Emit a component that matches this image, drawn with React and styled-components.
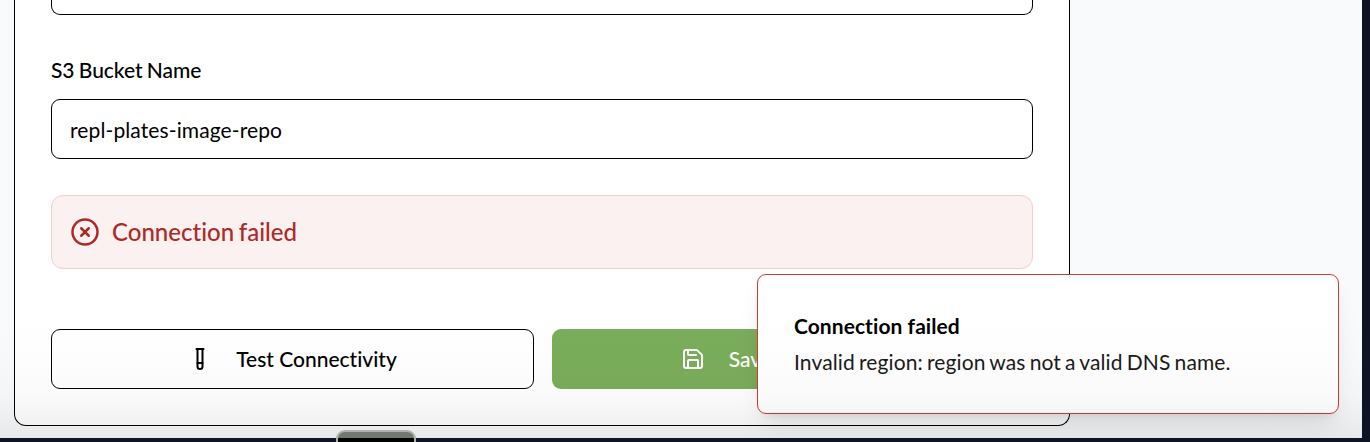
import React from "react";
import styled, { createGlobalStyle } from "styled-components";
import { CircleX, Save, TestTube } from "lucide-react";

const GlobalStyle = createGlobalStyle`
  *, *::before, *::after { box-sizing: border-box; }
  body { margin: 0; background: #0d1424; overflow: hidden; }
`;

const Desktop = styled.div`
  position: relative;
  width: 1370px;
  height: 442px;
  padding: 0 8px 4px 0;
  overflow: hidden;
  background: #0d1424;
  color: #000;
  font-family: Lato, "Liberation Sans", sans-serif;
  font-size: 21px;
  font-variant-ligatures: none;
  line-height: 30px;
`;

const Page = styled.main`
  position: relative;
  height: 438px;
  padding-left: 14px;
  overflow: hidden;
  background: #f8fafc;
`;

const Card = styled.section`
  display: flex;
  flex-direction: column;
  width: 1056px;
  height: 426px;
  padding: 0 36px 36px;
  border: 1px solid #000;
  border-top: 0;
  border-radius: 0 0 12px 12px;
  background: #fff;
`;

const Field = styled.div`
  height: ${(p) => p.$height || 60}px;
  flex: none;
  display: flex;
  align-items: center;
  padding: 2px 18px 0;
  border: 1px solid #000;
  border-radius: 9px;
  letter-spacing: 0.11px;
  ${(p) => p.$cut && "border-top: 0; border-top-left-radius: 0; border-top-right-radius: 0;"}
`;

const Label = styled.label`
  margin: 40px 0 14px;
  font-weight: 500;
  letter-spacing: -0.05px;
  word-spacing: -1px;
`;

const Alert = styled.div`
  display: flex;
  align-items: center;
  gap: 12px;
  height: 74px;
  margin-top: 36px;
  padding: 0 18px;
  border: 1px solid #f6cccc;
  border-radius: 12px;
  background: #fcf1f1;
  color: #ab2b26;
  font-size: 24px;
  font-weight: 500;
  word-spacing: -1.3px;
`;

const Actions = styled.div`
  display: grid;
  grid-template-columns: 483px 481px;
  gap: 18px;
  margin-top: 60px;
`;

const Button = styled.button`
  display: flex;
  align-items: center;
  justify-content: center;
  gap: 24px;
  height: 60px;
  padding: 0;
  border: ${(p) => (p.$primary ? "0" : "1px solid #000")};
  border-radius: 9px;
  background: ${(p) => (p.$primary ? "#7aad5a" : "#fff")};
  color: ${(p) => (p.$primary ? "#fff" : "#000")};
  font: inherit;
  font-variant-ligatures: none;
  font-weight: 500;
`;

const Toast = styled.div`
  position: absolute;
  left: 757px;
  top: 274px;
  width: 582px;
  height: 140px;
  padding: 36px;
  border: 1px solid #c93b34;
  border-radius: 9px;
  background: #fff;
  box-shadow: 0 15px 23px -5px rgba(0, 0, 0, 0.1), 0 6px 9px -6px rgba(0, 0, 0, 0.1);
`;

const ToastTitle = styled.div`
  font-weight: 700;
  letter-spacing: 0.06px;
`;

const ToastText = styled.div`
  margin-top: 6px;
  color: #1a1a1a;
  letter-spacing: 0.12px;
  word-spacing: -1.4px;
`;

const BottomShade = styled.div`
  position: absolute;
  inset: auto 0 0;
  height: 120px;
  pointer-events: none;
  background: linear-gradient(
    to bottom,
    rgba(0, 0, 0, 0),
    rgba(0, 0, 0, 0.006) 35%,
    rgba(0, 0, 0, 0.02) 65%,
    rgba(0, 0, 0, 0.07)
  );
`;

const Handle = styled.div`
  position: absolute;
  left: 336px;
  top: 430px;
  width: 80px;
  height: 20px;
  border: 2px solid #aeb1af;
  border-radius: 9px;
  background: linear-gradient(to bottom, #747873 6px, #000 6px);
`;

export default function App() {
  return (
    <>
      <GlobalStyle />
      <Desktop>
        <Page>
          <Card>
            <Field $cut $height={15} />
            <Label>S3 Bucket Name</Label>
            <Field>repl-plates-image-repo</Field>
            <Alert>
              <CircleX size={30} />
              <span>Connection failed</span>
            </Alert>
            <Actions>
              <Button>
                <TestTube size={24} />
                <span>Test Connectivity</span>
              </Button>
              <Button $primary>
                <Save size={24} />
                <span>Save Configuration</span>
              </Button>
            </Actions>
          </Card>
          <Toast>
            <ToastTitle>Connection failed</ToastTitle>
            <ToastText>Invalid region: region was not a valid DNS name.</ToastText>
          </Toast>
          <BottomShade />
        </Page>
        <Handle />
      </Desktop>
    </>
  );
}
